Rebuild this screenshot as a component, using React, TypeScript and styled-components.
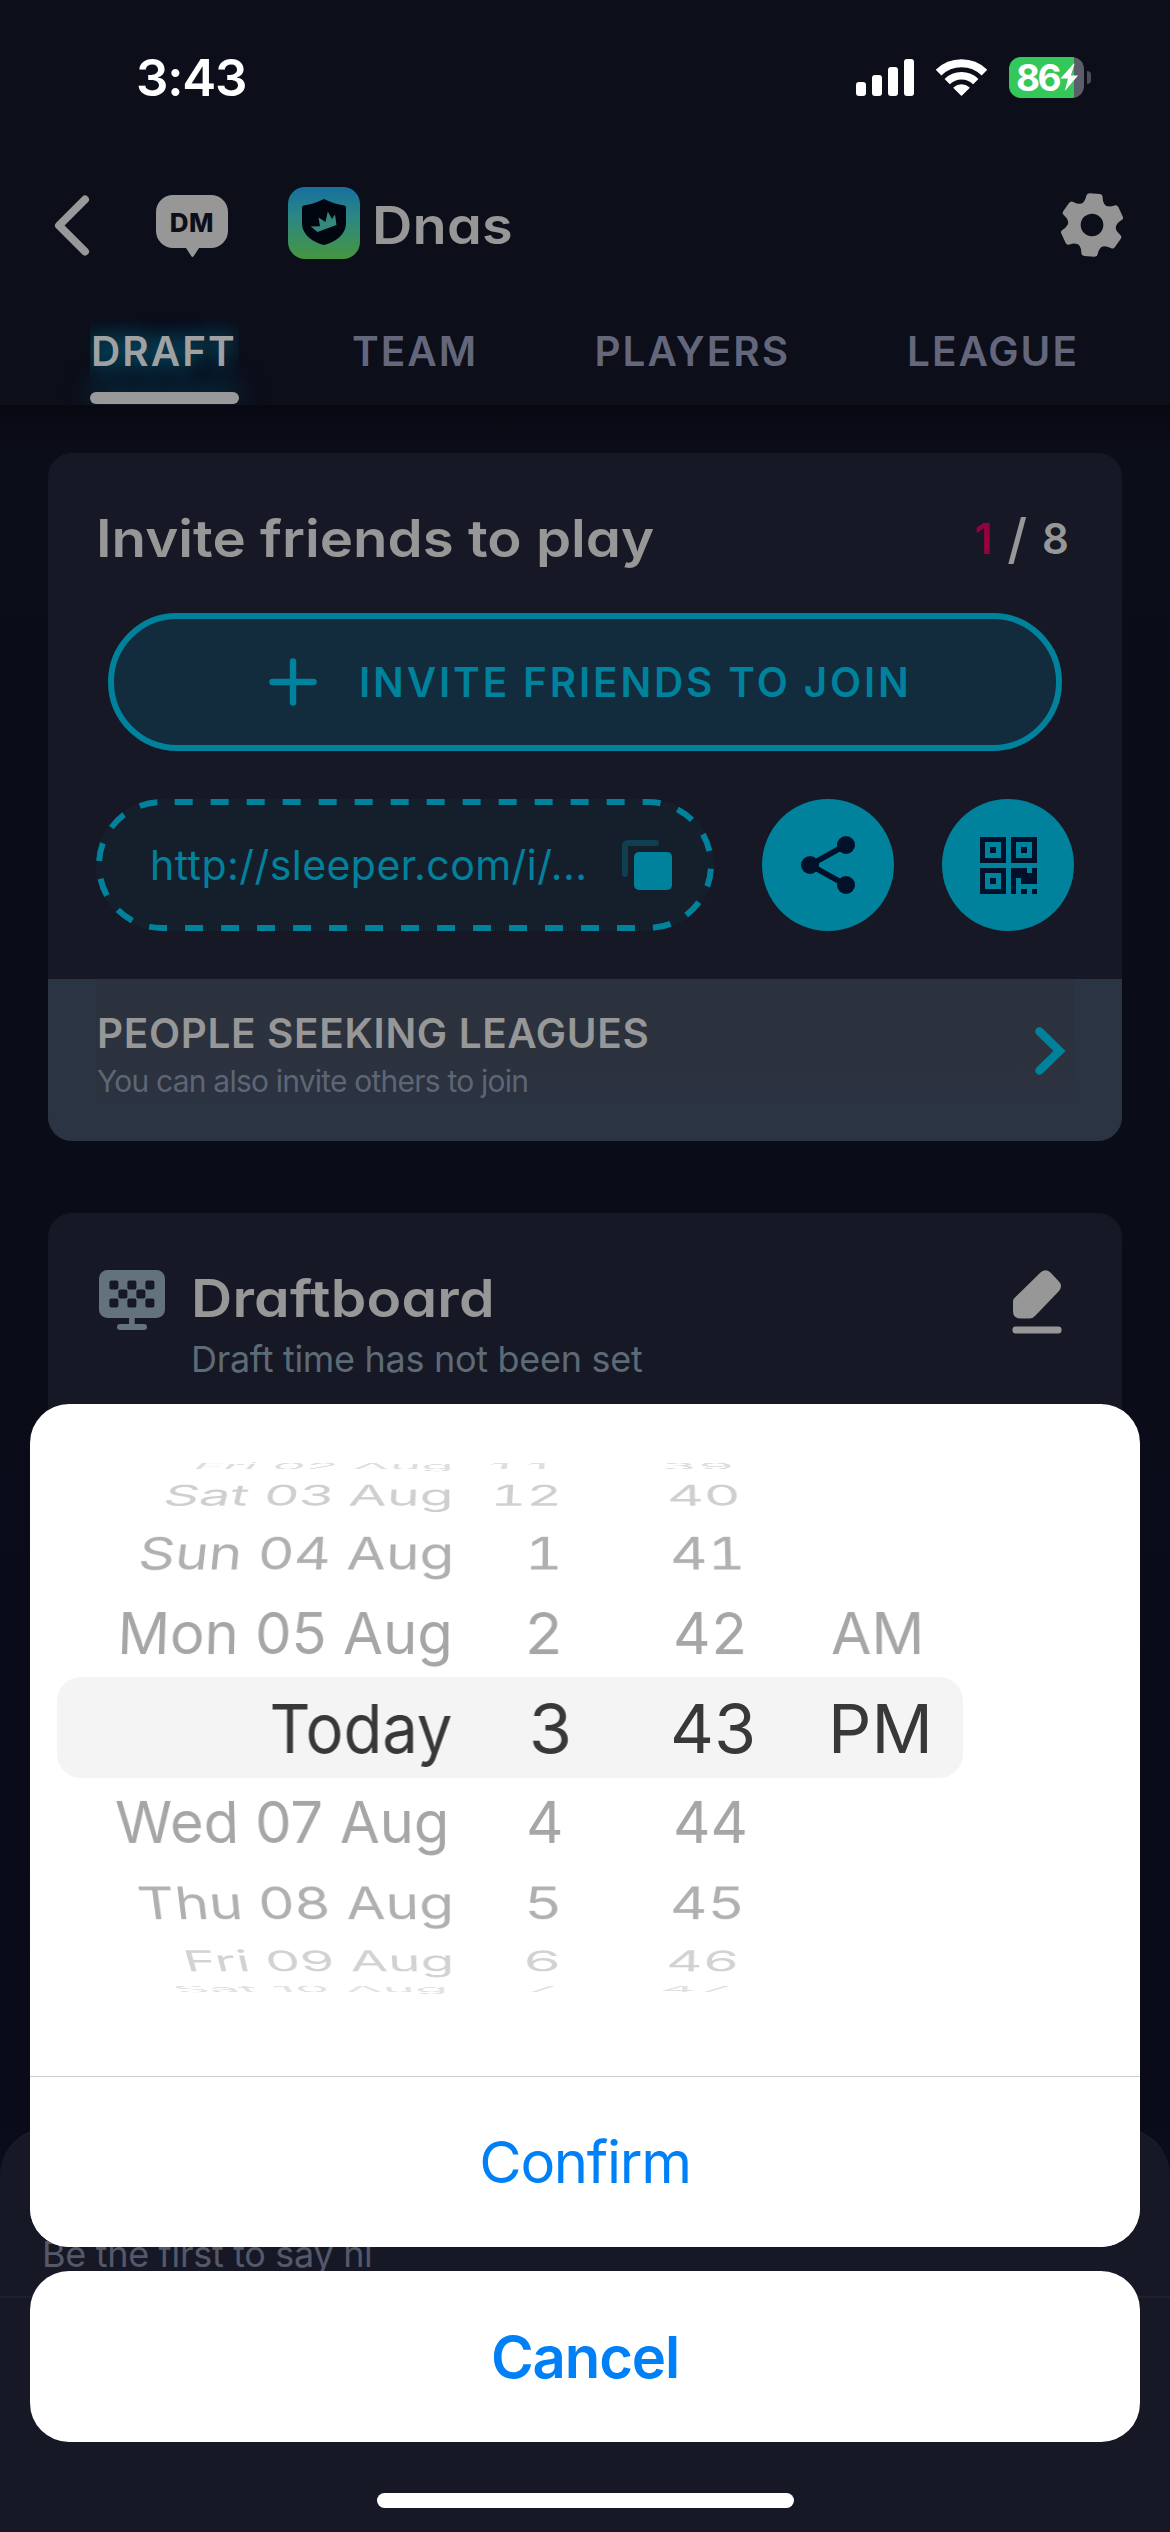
import React from 'react';
import styled, { createGlobalStyle } from 'styled-components';

const teal = '#00819c';
const gray = '#979797';

const GlobalStyle = createGlobalStyle`
  * { box-sizing: border-box; }
  html, body { margin: 0; padding: 0; background: #0a0d19; }
  body { font-family: Inter, "Liberation Sans", sans-serif; -webkit-font-smoothing: antialiased; }
  button { font: inherit; color: inherit; border: 0; padding: 0; background: none; }
  svg { display: block; flex: none; }
`;

const Screen = styled.div`
  position: relative;
  width: 1170px;
  height: 2532px;
  overflow: hidden;
  display: flex;
  flex-direction: column;
  background: #0a0d19;
`;

/* Brand type: single-storey "a", semi-bold, optionally widened */
const Brand = styled.span<{ size: number; spacing: number; color?: string; wide?: number }>`
  font-size: ${p => p.size}px;
  font-weight: 600;
  letter-spacing: ${p => p.spacing}px;
  color: ${p => p.color || gray};
  font-feature-settings: "cv11";
  white-space: nowrap;
  transform-origin: left center;
  transform: ${p => (p.wide ? `scaleX(${p.wide})` : 'none')};
`;

const Header = styled.header`
  height: 405px;
  flex: none;
  background: #0c0e1a;
`;

const StatusBar = styled.div`
  height: 155px;
  display: flex;
  align-items: center;
  justify-content: space-between;
  padding: 0 79px 0 136px;
`;

const Clock = styled.span`
  font-size: 51px;
  font-weight: 600;
  letter-spacing: -1.2px;
  line-height: 60px;
  padding-top: 1px;
  color: #fff;
`;

const StatusIcons = styled.div`
  display: flex;
  align-items: center;
`;

const Signal = styled.svg`margin-right: 22px;`;
const Wifi = styled.svg`margin-right: 22px;`;

const Battery = styled.div`
  width: 75px;
  height: 41px;
  border-radius: 12px;
  display: flex;
  align-items: center;
  padding-left: 7px;
  background: linear-gradient(90deg, #34c759 65px, #5b5d68 65px);
`;

const BatteryText = styled.span`
  width: 44px;
  font-size: 37px;
  font-weight: 700;
  letter-spacing: -2.5px;
  line-height: 41px;
  color: #fff;
`;

const BatteryNub = styled.span`
  width: 4px;
  height: 13px;
  margin-left: 3px;
  border-radius: 0 4px 4px 0;
  background: #4b4d58;
`;

const NavRow = styled.div`
  height: 140px;
  display: flex;
  align-items: center;
  padding: 0 47px 0 54px;
`;

const DmBubble = styled.div`
  margin-left: 66px;
  padding-top: 2px;
  display: flex;
  flex-direction: column;
  align-items: center;
`;

const DmBody = styled.div`
  width: 72px;
  height: 53px;
  border-radius: 17px;
  background: ${gray};
  color: #0c0e1a;
  font-size: 26px;
  font-weight: 800;
  line-height: 56px;
  letter-spacing: 0.6px;
  text-align: center;
`;

const Avatar = styled.div`
  width: 72px;
  height: 72px;
  margin: 0 0 4px 60px;
  border-radius: 17px;
  background: linear-gradient(180deg, #176f9f 0%, #2b8884 42%, #46963f 100%);
`;

const LeagueName = styled(Brand)`
  margin-left: 12px;
`;

const NavSpacer = styled.div`
  flex: 1;
`;

const Tabs = styled.nav`
  height: 110px;
  display: grid;
  grid-template-columns: 261px 242.5px 312.5px auto;
  padding-left: 90px;
`;

const Tab = styled.div`
  display: flex;
  flex-direction: column;
  padding-top: 24px;
`;

const TabLabel = styled(Brand)<{ active?: boolean }>`
  width: ${p => (p.active ? '149px' : 'auto')};
  height: 73px;
  padding-left: 1px;
  line-height: 65px;
  color: ${p => (p.active ? '#a0a2a2' : '#64677b')};
  ${p => p.active && `
    overflow: hidden;
    text-shadow: 0 0 20px rgba(0, 120, 150, .85), 0 0 30px rgba(0, 110, 140, .55);
  `}
`;

const TabBar = styled.div`
  width: 149px;
  height: 12px;
  border-radius: 6px;
  background: #999;
  box-shadow: 0 -6px 26px rgba(0, 105, 135, .55);
`;

const Main = styled.main`
  height: 1723px;
  flex: none;
  overflow: hidden;
  padding: 48px 48px 0;
  position: relative;
  background: linear-gradient(180deg, #080812 0, #0b0d19 44px, #090c18 100%);
`;

const Card = styled.section`
  border-radius: 24px;
  overflow: hidden;
  background: #161825;
`;

const InviteCard = styled(Card)`
  height: 688px;
  margin-bottom: 72px;
`;

const TitleRow = styled.div`
  height: 160px;
  padding: 11px 53px 0 48px;
  display: flex;
  align-items: center;
  justify-content: space-between;
`;

const Counter = styled.div`
  display: flex;
  align-items: center;
`;

const Slash = styled.span`
  margin: 0 15px 0 15px;
  font-size: 54px;
  font-weight: 500;
  line-height: 60px;
  color: ${gray};
`;

const InviteButton = styled.button`
  width: 954px;
  height: 138px;
  margin: 0 60px 48px;
  padding-left: 155px;
  display: flex;
  align-items: center;
  gap: 42px;
  border: 6px solid ${teal};
  border-radius: 69px;
  background: #122b3d;
`;

const ShareRow = styled.div`
  height: 132px;
  padding: 0 48px;
  display: flex;
  gap: 48px;
`;

const LinkPill = styled.div`
  position: relative;
  width: 618px;
  height: 132px;
  padding: 0 42px 0 54px;
  display: flex;
  align-items: center;
  justify-content: space-between;
  border-radius: 66px;
  background: #151f2c;
`;

const DashedOutline = styled.svg`
  position: absolute;
  inset: 0;
`;

const LinkText = styled.span`
  font-size: 41px;
  letter-spacing: 0.45px;
  color: ${teal};
  white-space: nowrap;
`;

const RoundButton = styled.button`
  width: 132px;
  height: 132px;
  border-radius: 50%;
  display: flex;
  align-items: center;
  justify-content: center;
  background: ${teal};
`;

const SeekingRow = styled.div`
  height: 162px;
  margin-top: 48px;
  padding: 0 48px;
  background: #2b3443;
`;

const SeekingInner = styled.div`
  height: 144px;
  padding-right: 8px;
  display: flex;
  align-items: center;
  justify-content: space-between;
  background: linear-gradient(180deg, #2c313e 0, #2c323f 112px, #2b3443 124px);
`;

const Stack = styled.div<{ top?: number }>`
  display: flex;
  flex-direction: column;
  padding-top: ${p => p.top || 0}px;
`;

const SeekingTitle = styled(Brand)`line-height: 50px; padding-left: 1px;`;
const SeekingNote = styled.span`
  font-size: 30px;
  letter-spacing: -0.79px;
  line-height: 44px;
  padding-left: 1px;
  color: #5c6675;
`;

const DraftCard = styled(Card)`
  height: 800px;
  padding: 57px 60px 0 51px;
  display: flex;
  align-items: flex-start;
`;

const DraftText = styled(Stack)`
  flex: 1;
  padding-left: 26px;
`;

const DraftTitle = styled(Brand)`line-height: 58px;`;
const DraftNote = styled.span`
  font-size: 36px;
  letter-spacing: -0.3px;
  line-height: 62px;
  color: #5d6b76;
`;

const ChatPanel = styled.section`
  flex: 1;
  border-top: 2px solid #1d1f2c;
  border-radius: 48px 48px 0 0;
  background: #161825;
`;

const ChatHint = styled.div`
  height: 168px;
  padding: 84px 0 0 42px;
  border-bottom: 2px solid #1e202d;
  font-size: 36px;
  letter-spacing: -0.32px;
  line-height: 80px;
  color: #555869;
`;

const Overlay = styled.div`
  position: absolute;
  inset: 0;
  padding: 0 30px 24px;
  display: flex;
  flex-direction: column;
  align-items: center;
  justify-content: flex-end;
`;

const Sheet = styled.div`
  width: 100%;
  height: 843px;
  margin-bottom: 24px;
  display: flex;
  flex-direction: column;
  border-radius: 39px;
  background: #fff;
`;

const Wheel = styled.div`
  height: 673px;
  padding: 56px 27px 0;
  border-bottom: 1px solid #cbcdd0;
`;

const SheetButton = styled.button<{ bold?: boolean }>`
  width: 100%;
  height: ${p => (p.bold ? 171 : 170)}px;
  border-radius: 39px;
  background: #fff;
  color: #0080f6;
  font-size: 58px;
  font-weight: ${p => (p.bold ? 600 : 400)};
  letter-spacing: ${p => (p.bold ? -1.1 : -1.3)}px;
`;

const HomeIndicator = styled.div`
  width: 417px;
  height: 15px;
  margin-top: 51px;
  border-radius: 8px;
  background: #fff;
`;

const WheelRow = styled.div<{ h: number; tone: string; selected?: boolean }>`
  width: 906px;
  height: ${p => p.h}px;
  display: grid;
  grid-template-columns: 397px 109px 104px 295px;
  align-items: center;
  border-radius: 24px;
  background: ${p => (p.selected ? '#f4f4f4' : 'transparent')};
  color: ${p => p.tone};
  font-size: ${p => (p.selected ? 68 : 58)}px;
  line-height: 0;
`;

const WheelCell = styled.span<{ side: 'left' | 'right'; num?: boolean; sx: number; sy: number; tilt: number; shift: number }>`
  justify-self: ${p => (p.side === 'right' ? 'end' : 'start')};
  white-space: nowrap;
  font-variant-numeric: ${p => (p.num ? 'tabular-nums' : 'normal')};
  margin-left: ${p => (p.side === 'left' ? (p.num ? 108 : 163) : 0)}px;
  transform-origin: ${p => p.side} center;
  transform: translateX(${p => p.shift}px) scale(${p => p.sx}, ${p => p.sy / Math.cos((p.tilt * Math.PI) / 180)})
    perspective(1200px) rotateX(${p => p.tilt}deg);
`;

type Cell = [text: string, scaleX: number, shift: number];
type RowData = { h: number; tone: string; sy: number; tilt: number; selected?: boolean; date: Cell; hour: Cell; minute: Cell; half?: Cell };

const rows: RowData[] = [
  { h: 12, tone: '#dedede', sy: 0.16, tilt: 58, date: ['Fri 02 Aug', 0.915, 0], hour: ['11', 1, -4], minute: ['39', 0.98, -10] },
  { h: 45, tone: '#cfcfcf', sy: 0.5, tilt: 40, date: ['Sat 03 Aug', 0.952, 0], hour: ['12', 0.95, -1], minute: ['40', 0.98, -4] },
  { h: 72, tone: '#b0b0b0', sy: 0.78, tilt: 25, date: ['Sun 04 Aug', 0.978, 0], hour: ['1', 1, 0], minute: ['41', 1, -1] },
  { h: 88, tone: '#a6a6a6', sy: 1, tilt: 8, date: ['Mon 05 Aug', 0.998, -1], hour: ['2', 1.05, 1], minute: ['42', 1, 2], half: ['AM', 1.01, 1] },
  { h: 101, tone: '#383838', sy: 1, tilt: 0, selected: true, date: ['Today', 0.931, -2], hour: ['3', 1.03, 11], minute: ['43', 1, -1], half: ['PM', 1, -2] },
  { h: 88, tone: '#a6a6a6', sy: 1, tilt: -8, date: ['Wed 07 Aug', 0.998, -5], hour: ['4', 1, 1], minute: ['44', 1, 2] },
  { h: 74, tone: '#b0b0b0', sy: 0.78, tilt: -25, date: ['Thu 08 Aug', 0.984, 0], hour: ['5', 1.03, 0], minute: ['45', 1, -1] },
  { h: 41, tone: '#d2d2d2', sy: 0.5, tilt: -40, date: ['Fri 09 Aug', 0.952, 0], hour: ['6', 1.03, -1], minute: ['46', 0.98, -5] },
  { h: 16, tone: '#e2e2e2', sy: 0.16, tilt: -58, date: ['Sat 10 Aug', 0.944, -6], hour: ['7', 0.97, -4], minute: ['47', 0.96, -11] },
];

const tabs = ['DRAFT', 'TEAM', 'PLAYERS', 'LEAGUE'];

const checks = [
  [0, 0], [2, 0], [4, 0], [1, 1], [3, 1], [0, 2], [2, 2], [4, 2],
];

const qrModules = [
  [6, 6], [7, 6], [8, 6], [10, 6],
  [6, 7], [7, 7], [8, 7], [9, 7], [10, 7],
  [6, 8], [8, 8], [9, 8], [10, 8],
  [6, 9],
  [6, 10], [8, 10], [10, 10],
];

function Gear() {
  return (
    <svg width="62" height="64" viewBox="-31.500 -32.500 63 65" fill="#949494">
      <g transform="rotate(5)">
        {[0, 60, 120, 180, 240, 300].map(a => (
          <path key={a} transform={`rotate(${a})`} d="M-15 -19 Q-9 -21.500 -8.300 -29 Q-8 -32 -5 -32 H5 Q8 -32 8.300 -29 Q9 -21.500 15 -19 V0 H-15 Z" />
        ))}
        <circle r="23" />
        <circle r="11.500" fill="#0c0e1a" />
      </g>
    </svg>
  );
}

function QrIcon() {
  return (
    <svg width="57" height="57" viewBox="0 0 11 11" fill="#01112a" shapeRendering="crispEdges">
      {[[0, 0], [6, 0], [0, 6]].map(([x, y]) => (
        <g key={`${x}-${y}`} transform={`translate(${x} ${y})`}>
          <rect x="0.5" y="0.5" width="4" height="4" fill="none" stroke="#01112a" />
          <rect x="2" y="2" width="1" height="1" />
        </g>
      ))}
      {qrModules.map(([x, y]) => <rect key={`${x},${y}`} x={x} y={y} width="1" height="1" />)}
    </svg>
  );
}

export default function App() {
  return (
    <Screen>
      <GlobalStyle />
      <Header>
        <StatusBar>
          <Clock>3:43</Clock>
          <StatusIcons>
            <Signal width="58" height="37" viewBox="0 0 58 37" fill="#fff">
              <rect x="0" y="23" width="10" height="14" rx="3" />
              <rect x="16" y="16" width="10" height="21" rx="3" />
              <rect x="32" y="8" width="10" height="29" rx="3" />
              <rect x="48" y="0" width="10" height="37" rx="3" />
            </Signal>
            <Wifi width="51" height="37" viewBox="0 0 51 37" fill="none" stroke="#fff">
              <path d="M2.600 13.600 A33 33 0 0 1 48.400 13.600" strokeWidth="8" />
              <path d="M11.200 22.600 A20.500 20.500 0 0 1 39.800 22.600" strokeWidth="7.500" />
              <path d="M25.500 36 L18.200 28.800 A11 11 0 0 1 32.800 28.800 Z" fill="#fff" strokeWidth="1.500" strokeLinejoin="round" />
            </Wifi>
            <Battery>
              <BatteryText>86</BatteryText>
              <svg width="19" height="29" viewBox="0 0 19 29" fill="#fff">
                <path d="M13.800 0.500 L0.500 15.500 H8 L4.800 28 L18 12.500 H10.800 L14.500 1 Z" />
              </svg>
            </Battery>
            <BatteryNub />
          </StatusIcons>
        </StatusBar>
        <NavRow>
          <svg width="36" height="61" viewBox="0 0 36 61" fill="none" stroke="#98989a" strokeWidth="8" strokeLinecap="round" strokeLinejoin="round">
            <path d="M31 4.500 L5 30.500 L31 56.500" />
          </svg>
          <DmBubble>
            <DmBody>DM</DmBody>
            <svg width="13" height="9" viewBox="0 0 13 9" fill={gray}>
              <path d="M0 0 H13 L7.800 8 Q6.500 10 5.200 8 Z" />
            </svg>
          </DmBubble>
          <Avatar>
            <svg width="72" height="72" viewBox="0 0 72 72">
              <path fill="#00050f" d="M36 12 Q46 17 56.500 18.500 Q58 19 58 20.500 V36 C58 48 47 55 36 58 C25 55 14 48 14 36 V20.500 Q14 19 15.500 18.500 Q26 17 36 12 Z" />
              <path fill="#35897c" d="M22.700 39.500 L32 39.200 L30.500 30.500 L37.500 35 L39.800 24.500 L44 32 L47 27.500 L48.500 38 L29.500 45 Z" />
            </svg>
          </Avatar>
          <LeagueName size={52} spacing={0.2} wide={1.075}>Dnas</LeagueName>
          <NavSpacer />
          <Gear />
        </NavRow>
        <Tabs>
          {tabs.map((t, i) => (
            <Tab key={t}>
              <TabLabel size={40.5} spacing={2} active={i === 0}>{t}</TabLabel>
              {i === 0 && <TabBar />}
            </Tab>
          ))}
        </Tabs>
      </Header>

      <Main>
        <InviteCard>
          <TitleRow>
            <Brand size={52} spacing={0} wide={1.085}>Invite friends to play</Brand>
            <Counter>
              <Brand size={42} spacing={0} color="#95023f">1</Brand>
              <Slash>/</Slash>
              <Brand size={42} spacing={0}>8</Brand>
            </Counter>
          </TitleRow>
          <InviteButton>
            <svg width="48" height="48" viewBox="0 0 48 48" stroke={teal} strokeWidth="6.500" strokeLinecap="round">
              <path d="M24 3.500 V44.500 M3.500 24 H44.500" />
            </svg>
            <Brand size={40.5} spacing={2.85} color={teal}>INVITE FRIENDS TO JOIN</Brand>
          </InviteButton>
          <ShareRow>
            <LinkPill>
              <DashedOutline width="618" height="132" fill="none">
                <rect x="3" y="3" width="612" height="126" rx="63" stroke={teal} strokeWidth="6" strokeDasharray="18 17.995" strokeDashoffset="-12.7" />
              </DashedOutline>
              <LinkText>http://sleeper.com/i/...</LinkText>
              <svg width="50" height="50" viewBox="0 0 50 50">
                <path d="M3 34 V6 Q3 3 6 3 H34" fill="none" stroke="#0f3f50" strokeWidth="6" strokeLinecap="round" />
                <rect x="12" y="12" width="38" height="38" rx="5" fill={teal} />
              </svg>
            </LinkPill>
            <RoundButton>
              <svg width="54" height="58" viewBox="0 0 54 58" fill="#01112a">
                <path d="M45 9 L9 29 L45 49" fill="none" stroke="#01112a" strokeWidth="5.500" />
                <circle cx="45" cy="9" r="9" />
                <circle cx="9" cy="29" r="9" />
                <circle cx="45" cy="49" r="9" />
              </svg>
            </RoundButton>
            <RoundButton><QrIcon /></RoundButton>
          </ShareRow>
          <SeekingRow>
            <SeekingInner>
              <Stack top={10}>
                <SeekingTitle size={40.5} spacing={0.65}>PEOPLE SEEKING LEAGUES</SeekingTitle>
                <SeekingNote>You can also invite others to join</SeekingNote>
              </Stack>
              <svg width="31" height="48" viewBox="0 0 31 48" fill="none" stroke={teal} strokeWidth="8.500" strokeLinecap="round">
                <path d="M4.500 4.500 L24.500 24 L4.500 43.500" />
              </svg>
            </SeekingInner>
          </SeekingRow>
        </InviteCard>

        <DraftCard>
          <svg width="66" height="60" viewBox="0 0 66 60" fill="#64727e">
            <rect width="66" height="48" rx="8.500" />
            <rect x="30" y="47" width="5.700" height="8" />
            <rect x="18" y="54" width="30" height="6" rx="3" />
            {checks.map(([c, r]) => (
              <rect key={`${c}-${r}`} x={10.4 + c * 9} y={10.6 + r * 9} width="9" height="9" rx="1.800" fill="#161825" />
            ))}
          </svg>
          <DraftText>
            <DraftTitle size={52} spacing={0.2} wide={1.098}>Draftboard</DraftTitle>
            <DraftNote>Draft time has not been set</DraftNote>
          </DraftText>
          <svg width="50" height="64" viewBox="0 0 50 64" fill={gray}>
            <path d="M2 28.500 L28.500 2.500 Q33.500 -2 38.500 2.500 L46.500 11 Q51.500 16 46.500 21.500 L23.500 45.500 Q21 48.500 17.500 48.500 H8.500 Q1 48.500 1 41 V31.500 Q1 29.500 2 28.500 Z" />
            <rect x="0.500" y="56.500" width="49" height="7" rx="3" />
          </svg>
        </DraftCard>
      </Main>

      <ChatPanel>
        <ChatHint>Be the first to say hi</ChatHint>
      </ChatPanel>

      <Overlay>
        <Sheet>
          <Wheel>
            {rows.map(r => (
              <WheelRow key={r.date[0]} h={r.h} tone={r.tone} selected={r.selected}>
                <WheelCell side="right" sx={r.date[1]} sy={r.sy} tilt={r.tilt} shift={r.date[2]}>{r.date[0]}</WheelCell>
                <WheelCell side="right" num sx={r.hour[1]} sy={r.sy} tilt={r.tilt} shift={r.hour[2]}>{r.hour[0]}</WheelCell>
                <WheelCell side="left" num sx={r.minute[1]} sy={r.sy} tilt={r.tilt} shift={r.minute[2]}>{r.minute[0]}</WheelCell>
                {r.half && (
                  <WheelCell side="left" sx={r.half[1]} sy={r.sy} tilt={r.tilt} shift={r.half[2]}>{r.half[0]}</WheelCell>
                )}
              </WheelRow>
            ))}
          </Wheel>
          <SheetButton>Confirm</SheetButton>
        </Sheet>
        <SheetButton bold>Cancel</SheetButton>
        <HomeIndicator />
      </Overlay>
    </Screen>
  );
}
